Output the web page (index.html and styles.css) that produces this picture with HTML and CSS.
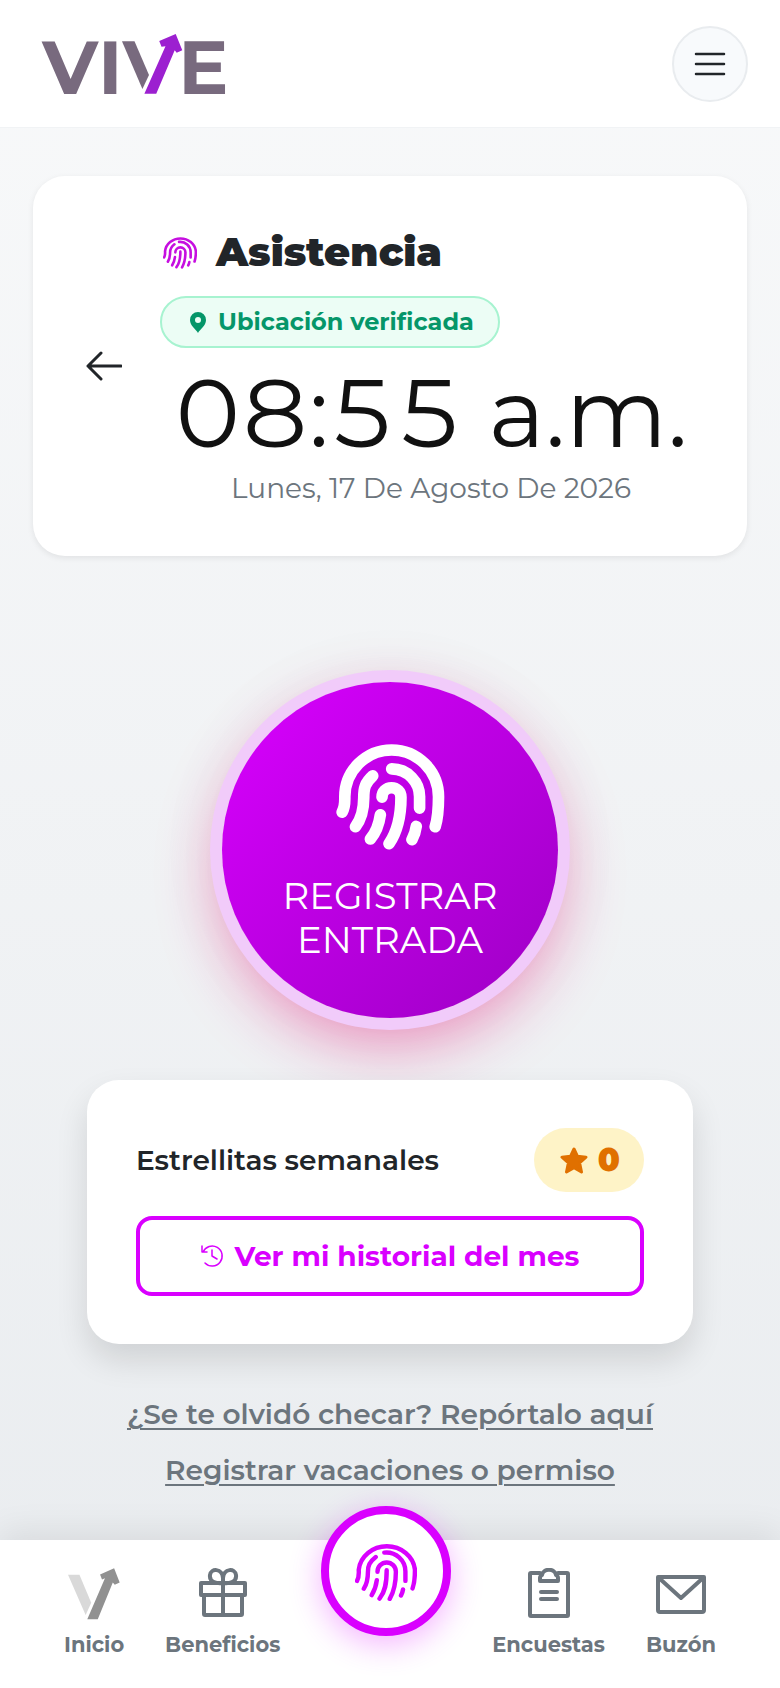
FILE: index.html
```html
<!DOCTYPE html>
<html lang="es">
<head>
	<meta charset="utf-8" />
	<meta name="viewport" content="width=device-width, initial-scale=1">
	<title>VIVE - Asistencia</title>
	<link rel="stylesheet" href="styles.css">
</head>

<body>
	<!-- Shared icons -->
	<svg class="sprite" aria-hidden="true">
		<symbol id="fingerprint" viewBox="46 38 182 176">
			<path d="M52 155C59 142 57 130 57 122A83 77 0 0 1 222 122C222 145 221 160 215 177M107 85C88 100 84 110 84 128C84 150 80 165 72 178M132 72A56 56 0 0 1 194 128V155M112 128A27 27 0 0 1 166 128C166 160 161 185 148 208M139 124C139 165 134 188 118 207M110 153C108 170 102 185 95 197M187 180C186 188 184 192 181 198" />
		</symbol>
	</svg>

	<header class="topbar">
		<a class="logo" href="#" aria-label="VIVE">
			<svg viewBox="126 101 553 182">
				<text x="124" y="282">V</text>
				<text x="293" y="282">I</text>
				<path class="logo-stem" d="M366 123H404L448 225L428 268Z" />
				<path class="logo-arrow" d="M434 282L498 138L486 140L479 122L529 101L549 150L532 158L526 150L470 282Z" />
				<text x="537" y="282">E</text>
			</svg>
		</a>
		<button class="menu-button" aria-label="Menú">
			<svg viewBox="0 0 64 48"><path d="M4 4H60M4 24H60M4 44H60" /></svg>
		</button>
	</header>

	<main>
		<section class="card attendance">
			<a class="back" href="#" aria-label="Regresar">
				<svg viewBox="0 0 36 30"><path d="M35 15H2M15 2L2 15L15 28" /></svg>
			</a>
			<div class="attendance-info">
				<h1><svg><use href="#fingerprint" /></svg>Asistencia</h1>
				<span class="location">
					<svg viewBox="0 0 16 21"><path d="M8 21C6 17 0 14 0 8A8 8 0 0 1 16 8C16 14 10 17 8 21ZM8 5A3 3 0 1 0 8 11A3 3 0 1 0 8 5Z" /></svg>
					Ubicación verificada
				</span>
				<div class="clock">08:55 a.m.</div>
				<div class="date">Lunes, 17 De Agosto De 2026</div>
			</div>
		</section>

		<button class="check-button">
			<svg viewBox="73 73 327 319"><path d="M91 278C100 262 99 250 99 232A141 141 0 0 1 381 232C381 270 378 300 371 322M183 169C160 190 156 205 156 235C156 275 148 300 131 322M240 148A84 84 0 0 1 324 235V266M211 233A28 28 0 0 1 268 233C268 290 258 335 232 373M206 286C202 315 192 340 176 359M314 321C312 338 308 348 301 361" /></svg>
			<span>REGISTRAR<br>ENTRADA</span>
		</button>

		<section class="card stars">
			<div class="stars-row">
				<span>Estrellitas semanales</span>
				<span class="stars-count">
					<svg viewBox="0 0 28 27"><path d="M14 2L17.4 9.2L26 10.2L19.6 15.8L21.5 25L14 20.7L6.5 25L8.4 15.8L2 10.2L10.6 9.2Z" /></svg>
					0
				</span>
			</div>
			<button class="history-button">
				<svg viewBox="0 0 44 44"><path d="M4 14A20 20 0 1 1 8 36M2 2V14H12M22 10V22L32 28" /></svg>
				Ver mi historial del mes
			</button>
		</section>

		<div class="links">
			<a href="#">¿Se te olvidó checar? Repórtalo aquí</a>
			<a href="#">Registrar vacaciones o permiso</a>
		</div>
	</main>

	<nav class="bottom-nav">
		<a href="#">
			<svg class="nav-logo" viewBox="203 599 159 157">
				<path class="nav-logo-stem" d="M203 619H238L274 704L257 742Z" />
				<path class="nav-logo-arrow" d="M262 755L316 629L307 633L301 618L344 599L361 642L346 649L340 642L294 755Z" />
			</svg>
			Inicio
		</a>
		<a href="#">
			<svg viewBox="0 0 52 52"><path d="M4 15H48V27H4ZM7 27V46Q7 47 8 47H44Q45 47 45 46V27M26 15V47M26 15C20 16 12 14 13 7C14 0 25 0 26 10V15M26 15C32 16 40 14 39 7C38 0 27 0 26 10" /></svg>
			Beneficios
		</a>
		<a class="nav-check" href="#" aria-label="Asistencia">
			<svg><use href="#fingerprint" /></svg>
		</a>
		<a href="#">
			<svg viewBox="0 0 52 52"><path d="M17 5H8Q7 5 7 6V47Q7 48 8 48H44Q45 48 45 47V6Q45 5 44 5H35M17 13V10Q17 8 19 7C20 0 32 0 33 7Q35 8 35 10V13ZM18 24H34M18 31H34" /></svg>
			Encuestas
		</a>
		<a href="#">
			<svg viewBox="0 0 52 52"><path d="M3 9H49V42Q49 44 47 44H5Q3 44 3 42ZM4 10L26 30L48 10" /></svg>
			Buzón
		</a>
	</nav>
</body>

</html>
```
FILE: styles.css
```css
* {
	box-sizing: border-box;
	margin: 0;
	padding: 0;
}

body {
	display: flex;
	flex-direction: column;
	min-height: 100vh;
	font-family: Montserrat, Inter, sans-serif;
	font-size: 28px;
	line-height: 40px;
	color: #212529;
	background: linear-gradient(to bottom, #f8f9fa, #e9ecef);
}

svg {
	display: block;
	fill: none;
	stroke: currentColor;
	stroke-linecap: round;
	stroke-linejoin: round;
}

button {
	font: inherit;
	cursor: pointer;
}

a {
	color: inherit;
}

.sprite {
	position: absolute;
	width: 0;
	height: 0;
}

/* Top bar */

.topbar {
	display: flex;
	justify-content: space-between;
	align-items: center;
	height: 128px;
	padding: 0 32px 0 42px;
	background-color: white;
	border-bottom: 1px solid #f1f3f5;
}

.logo svg {
	width: 184px;
	height: 60px;
	fill: #786a7e;
	stroke: none;
	overflow: visible;
}

.logo text {
	font-family: Montserrat, Inter, sans-serif;
	font-size: 227px;
	font-weight: 700;
}

.logo .logo-arrow {
	fill: #9c20d0;
}

.menu-button {
	display: flex;
	justify-content: center;
	align-items: center;
	width: 76px;
	height: 76px;
	color: #212529;
	background-color: #f8fafc;
	border: 2px solid #e9ecef;
	border-radius: 50%;
}

.menu-button svg {
	width: 32px;
	height: 24px;
	stroke-width: 5;
}

/* Main content */

main {
	display: flex;
	flex-direction: column;
	padding: 48px 33px;
}

.card {
	background-color: white;
	border-radius: 32px;
}

.attendance {
	display: flex;
	align-items: center;
	gap: 38px;
	padding: 48px 45px 48px 53px;
	box-shadow: 0 2px 6px rgba(0, 0, 0, .08);
}

.back svg {
	width: 36px;
	height: 30px;
	stroke-width: 3;
}

.attendance-info {
	flex: 1;
}

h1 {
	display: flex;
	align-items: center;
	gap: 19px;
	padding-left: 3px;
	margin-bottom: 16px;
	font-size: 40px;
	font-weight: 900;
	line-height: 56px;
}

h1 svg {
	width: 34px;
	height: 34px;
	color: #c60fe0;
	stroke-width: 14;
}

.location {
	display: inline-flex;
	align-items: center;
	gap: 12px;
	height: 52px;
	padding: 0 24px 0 28px;
	font-size: 24px;
	font-weight: 700;
	color: #059669;
	background-color: #ecfdf5;
	border: 2px solid #a7f3d0;
	border-radius: 26px;
}

.location svg {
	width: 16px;
	height: 21px;
	fill: currentColor;
	fill-rule: evenodd;
	stroke: none;
}

.clock {
	margin-top: 10px;
	font-size: 96px;
	font-weight: 400;
	font-variant-numeric: tabular-nums;
	line-height: 110px;
	text-align: center;
	color: #111;
	white-space: nowrap;
}

.date {
	font-weight: 400;
	text-align: center;
	color: #6c757d;
}

/* Check in button */

.check-button {
	display: flex;
	flex-direction: column;
	align-items: center;
	justify-content: center;
	gap: 24px;
	width: 336px;
	height: 336px;
	margin: 126px auto 62px;
	padding-top: 6px;
	font-size: 37px;
	font-weight: 400;
	line-height: 44px;
	color: white;
	background: linear-gradient(135deg, #d900ff, #9d00c4);
	border: none;
	border-radius: 50%;
	box-shadow: 0 0 0 12px #f1cbfa, 0 24px 64px rgba(236, 28, 128, .48), 0 0 80px rgba(0, 0, 0, .05);
}

.check-button svg {
	width: 109px;
	height: 106px;
	stroke-width: 35;
}

/* Weekly stars */

.stars {
	display: flex;
	flex-direction: column;
	gap: 24px;
	margin: 0 54px 50px;
	padding: 48px 49px;
	box-shadow: 0 16px 32px rgba(0, 0, 0, .12);
}

.stars-row {
	display: flex;
	justify-content: space-between;
	align-items: center;
	font-weight: 600;
}

.stars-count {
	display: flex;
	align-items: center;
	gap: 10px;
	height: 64px;
	padding: 0 24px 0 26px;
	font-size: 32px;
	font-weight: 900;
	color: #e07000;
	background-color: #fef3c7;
	border-radius: 32px;
}

.stars-count svg {
	width: 28px;
	height: 27px;
	fill: currentColor;
	stroke-width: 3;
}

.history-button {
	display: flex;
	justify-content: center;
	align-items: center;
	gap: 12px;
	height: 80px;
	font-weight: 700;
	color: #d900ff;
	background-color: white;
	border: 4px solid #d900ff;
	border-radius: 16px;
}

.history-button svg {
	width: 22px;
	height: 22px;
	stroke-width: 3;
	overflow: visible;
}

.links {
	display: flex;
	flex-direction: column;
	align-items: center;
	gap: 16px;
	font-weight: 600;
	color: #6c757d;
}

.links a {
	text-underline-offset: 4px;
	text-decoration-thickness: 2px;
}

/* Bottom navigation */

.bottom-nav {
	display: flex;
	justify-content: space-between;
	align-items: flex-start;
	height: 148px;
	margin-top: auto;
	padding: 28px 64px 0;
	font-size: 21px;
	font-weight: 700;
	line-height: 28px;
	color: #6c757d;
	background-color: white;
	box-shadow: 0 -8px 32px rgba(0, 0, 0, .08);
}

.bottom-nav a {
	display: flex;
	flex-direction: column;
	align-items: center;
	gap: 11px;
	text-decoration: none;
}

.bottom-nav svg {
	width: 52px;
	height: 52px;
	stroke-width: 4;
}

.bottom-nav .nav-logo {
	stroke: none;
}

.nav-logo-stem {
	fill: #d9d9d9;
}

.nav-logo-arrow {
	fill: #919191;
}

.bottom-nav .nav-check {
	justify-content: center;
	width: 130px;
	height: 130px;
	margin-top: -62px;
	color: #d900ff;
	background-color: white;
	border: 8px solid #d900ff;
	border-radius: 50%;
	box-shadow: 0 8px 32px rgba(217, 0, 255, .3);
}

.bottom-nav .nav-check svg {
	width: 62px;
	height: 60px;
	stroke-width: 13;
}
```
